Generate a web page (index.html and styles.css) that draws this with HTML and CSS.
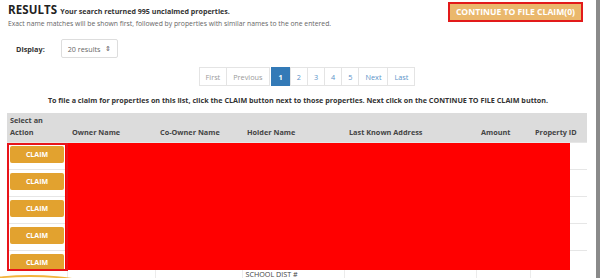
FILE: index.html
```html
<!DOCTYPE html>
<html lang="en">
<head>
<meta charset="utf-8">
<title>Results</title>
<link rel="stylesheet" href="styles.css">
</head>
<body>
<div class="page">
  <main class="content">
    <header class="top">
      <div class="intro">
        <h1 class="title"><span class="title-main">RESULTS</span> <span class="title-sub">Your search returned 995 unclaimed properties.</span></h1>
        <p class="note">Exact name matches will be shown first, followed by properties with similar names to the one entered.</p>
      </div>
      <button class="continue" type="button">CONTINUE TO FILE CLAIM(0)</button>
    </header>

    <div class="display">
      <span class="display-label">Display:</span>
      <div class="select"><span>20 results</span><span class="select-arrow">&#x21D5;</span></div>
    </div>

    <nav class="pager">
      <span class="pg disabled">First</span>
      <span class="pg disabled">Previous</span>
      <span class="pg active">1</span>
      <span class="pg">2</span>
      <span class="pg">3</span>
      <span class="pg">4</span>
      <span class="pg">5</span>
      <span class="pg">Next</span>
      <span class="pg">Last</span>
    </nav>

    <p class="instr">To file a claim for properties on this list, click the CLAIM button next to those properties. Next click on the CONTINUE TO FILE CLAIM button.</p>

    <div class="table-wrap">
      <table class="results">
        <colgroup>
          <col class="c1"><col class="c2"><col class="c3"><col class="c4"><col class="c5"><col class="c6"><col class="c7">
        </colgroup>
        <thead>
          <tr>
            <th>Select an<br>Action</th>
            <th>Owner Name</th>
            <th>Co-Owner Name</th>
            <th>Holder Name</th>
            <th>Last Known Address</th>
            <th>Amount</th>
            <th>Property ID</th>
          </tr>
        </thead>
        <tbody>
          <tr><td><button class="claim" type="button">CLAIM</button></td><td></td><td></td><td></td><td></td><td></td><td></td></tr>
          <tr><td><button class="claim" type="button">CLAIM</button></td><td></td><td></td><td></td><td></td><td></td><td></td></tr>
          <tr><td><button class="claim" type="button">CLAIM</button></td><td></td><td></td><td></td><td></td><td></td><td></td></tr>
          <tr><td><button class="claim" type="button">CLAIM</button></td><td></td><td></td><td></td><td></td><td></td><td></td></tr>
          <tr><td><button class="claim" type="button">CLAIM</button></td><td></td><td></td><td class="holder-last">SCHOOL DIST #</td><td></td><td></td><td></td></tr>
        </tbody>
      </table>
      <div class="redact"></div>
      <div class="outline"></div>
    </div>
  </main>
  <div class="scrollbar"></div>
  <div class="fab"></div>
</div>
</body>
</html>
```

FILE: styles.css
```css
* { box-sizing: border-box; }
html, body { margin: 0; padding: 0; }
body {
  font-family: "Open Sans", "Liberation Sans", sans-serif;
  color: #333;
  background: #fff;
  width: 600px;
  height: 278px;
  overflow: hidden;
}
.page {
  position: relative;
  display: flex;
  width: 600px;
  height: 278px;
  overflow: hidden;
}
.content {
  flex: 1;
  min-width: 0;
  display: flex;
  flex-direction: column;
}
.scrollbar {
  width: 4px;
  background: #8a8a8a;
}

/* header */
.top {
  display: flex;
  justify-content: space-between;
  align-items: flex-start;
  padding: 2px 13px 0 8px;
}
.intro { padding-top: 2px; }
.title {
  margin: 0;
  font-size: 11.5px;
  line-height: 12px;
  font-weight: 700;
}
.title-main {
  font-size: 11.5px;
  color: #222;
  letter-spacing: 0.1px;
}
.title-sub {
  font-size: 7.1px;
  color: #333;
}
.note {
  margin: 2px 0 0;
  font-size: 6.8px;
  line-height: 9px;
  color: #666;
}
.continue {
  margin: 0;
  height: 20px;
  padding: 0 6px;
  background: #eab86c;
  border: 2px solid #e21a1a;
  color: #fff;
  font-family: inherit;
  font-weight: 700;
  font-size: 8.6px;
  line-height: 16px;
  white-space: nowrap;
}

/* display */
.display {
  display: flex;
  align-items: center;
  gap: 16px;
  margin: 11px 0 0 16px;
}
.display-label {
  font-size: 7.3px;
  font-weight: 700;
  color: #333;
}
.select {
  display: flex;
  align-items: center;
  gap: 5px;
  height: 19px;
  padding: 0 6px 0 6px;
  border: 1px solid #ddd;
  border-radius: 2px;
  font-size: 7.2px;
  color: #666;
}
.select-arrow {
  font-size: 7px;
  color: #555;
}

/* pager */
.pager {
  display: flex;
  justify-content: center;
  margin: 9px 0 0 0;
  padding-left: 19px;
}
.pg {
  display: flex;
  align-items: center;
  justify-content: center;
  height: 19px;
  padding: 0 6px;
  border: 1px solid #e4e4e4;
  margin-left: -1px;
  font-size: 7.3px;
  color: #5b93c8;
  background: #fff;
}
.pg.disabled { color: #999; }
.pg.active {
  background: #337ab7;
  border-color: #337ab7;
  color: #fff;
  font-weight: 700;
  padding: 0 7px;
  margin-left: 1px;
}

/* instruction */
.instr {
  margin: 8px 0 0;
  text-align: center;
  font-size: 7.2px;
  font-weight: 700;
  line-height: 12px;
  color: #333;
}

/* table */
.table-wrap {
  position: relative;
  margin: 7px 0 0 7px;
  width: 580px;
}
.results {
  width: 580px;
  border-collapse: collapse;
  table-layout: fixed;
}
.c1 { width: 60px; }
.c2 { width: 88px; }
.c3 { width: 87px; }
.c4 { width: 102px; }
.c5 { width: 132px; }
.c6 { width: 54px; }
.c7 { width: 57px; }
.results th {
  background: #dcdcdc;
  height: 29px;
  padding: 0 4px 4px 5px;
  text-align: left;
  vertical-align: bottom;
  font-size: 7.3px;
  line-height: 12px;
  font-weight: 700;
  color: #444;
  white-space: nowrap;
}
.results th:first-child { padding-left: 3px; }
.results td {
  height: 27px;
  padding: 0;
  border-top: 1px solid #e6e6e6;
  border-left: 1px solid #ececec;
  vertical-align: top;
}
.results td:first-child { border-left: 0; padding: 3px 0 0 3px; }
.claim {
  display: block;
  width: 54px;
  height: 17px;
  margin: 0;
  padding: 0;
  border: 0;
  border-radius: 2px;
  background: #e2a22f;
  color: #fff;
  font-family: inherit;
  font-size: 7px;
  font-weight: 700;
}
.holder-last {
  padding: 18px 0 0 3px !important;
  font-size: 7.2px;
  line-height: 10px;
  color: #444;
  white-space: nowrap;
}

/* overlays: redaction and highlight */
.redact {
  position: absolute;
  left: 58px;
  top: 30px;
  width: 505px;
  height: 127px;
  background: #ff0000;
}
.outline {
  position: absolute;
  left: 0;
  top: 30px;
  width: 61px;
  height: 128px;
  border: 2px solid #e8141a;
}
.fab {
  position: absolute;
  left: -40px;
  top: 275px;
  width: 140px;
  height: 30px;
  border-radius: 50%;
  border-top: 2px solid #f3b43c;
}
```
